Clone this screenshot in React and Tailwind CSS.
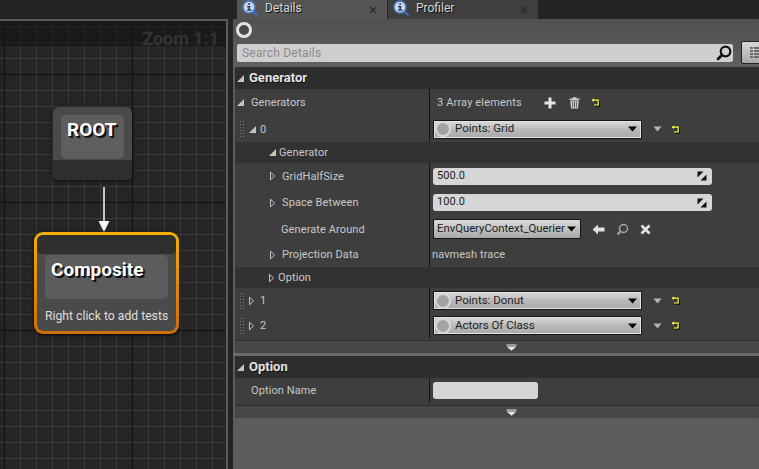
import React from "react";

const Tri = ({ open, className = "" }) =>
  open ? (
    <svg width="9" height="9" viewBox="0 0 9 9" className={`shrink-0 ${className}`}>
      <path d="M8 1V8H1Z" fill="#c4c4c4" />
    </svg>
  ) : (
    <svg width="7" height="10" viewBox="0 0 7 10" className={`shrink-0 ${className}`}>
      <path d="M1.5 1.2L5.6 5L1.5 8.8Z" fill="none" stroke="#c4c4c4" strokeWidth="1" />
    </svg>
  );

const InfoIcon = () => (
  <svg width="17" height="17" viewBox="0 0 17 17" className="shrink-0">
    <path d="M10.5 11L15 15" stroke="#3d6fc4" strokeWidth="2" strokeLinecap="round" />
    <circle cx="7" cy="7" r="6" fill="#c8d8ec" stroke="#4a7cc9" strokeWidth="1.6" />
    <rect x="5" y="6" width="3.4" height="1.2" fill="#26364d" />
    <rect x="6.4" y="6" width="1.6" height="4" fill="#26364d" />
    <rect x="5" y="9.6" width="4.6" height="1.2" fill="#26364d" />
    <rect x="6.2" y="3.2" width="1.8" height="1.6" fill="#26364d" />
  </svg>
);

const CloseX = () => (
  <svg width="8" height="8" viewBox="0 0 8 8">
    <path d="M1 1L7 7M7 1L1 7" stroke="#2c2c2c" strokeWidth="1.2" />
  </svg>
);

const ResetIcon = () => (
  <svg width="9" height="9" viewBox="0 0 9 9" className="shrink-0">
    <path d="M1.4 2.2H7.6V7.4H3" fill="none" stroke="#111" strokeWidth="1.2" transform="translate(.8 .8)" />
    <path d="M1.4 2.2H7.2V7H3" fill="none" stroke="#ffff33" strokeWidth="1.2" />
    <path d="M3 .4V4L.6 2.2Z" fill="#ffff33" />
  </svg>
);

const SmallDown = () => (
  <svg width="9" height="6" viewBox="0 0 9 6" className="shrink-0">
    <path d="M.5 .5H8.5L4.5 5.5Z" fill="#b4b4b4" />
  </svg>
);

const Caret = () => (
  <svg width="9" height="6" viewBox="0 0 9 6" className="shrink-0">
    <path d="M0 .5H9L4.5 5.5Z" fill="#050505" />
  </svg>
);

const Grip = () => (
  <div className="grid grid-cols-2 gap-x-[2px] gap-y-[2px] w-[4px] shrink-0">
    {Array.from({ length: 12 }).map((_, i) => (
      <span key={i} className="w-px h-px bg-[#777]" />
    ))}
  </div>
);

const Expand = () => (
  <svg width="10" height="10" viewBox="0 0 10 10" className="shrink-0">
    <path d="M.5 .5H6.5L.5 6.5Z" fill="#111" />
    <path d="M9.5 9.5H3.5L9.5 3.5Z" fill="#111" />
  </svg>
);

const FoldArrow = () => (
  <svg width="11" height="7" viewBox="0 0 11 7">
    <path d="M.5 .5H10.5V1.6H.5Z" fill="#e6e6e6" />
    <path d="M.5 2.6H10.5L5.5 6.8Z" fill="#e6e6e6" />
  </svg>
);

const Row = ({ h, left, children, leftClass = "pl-[17px]" }) => (
  <div className={`flex ${h}`}>
    <div className={`w-[194px] flex items-center shrink-0 ${leftClass}`}>{left}</div>
    <div className="w-px bg-[#141414] shrink-0" />
    <div className="flex-1 flex items-center pl-[3px] min-w-0">{children}</div>
  </div>
);

const NumberField = ({ value }) => (
  <div className="w-[279px] h-[17px] rounded-[3px] bg-[#d6d6d6] flex items-center justify-between pl-[4px] pr-[5px] text-[11px] tracking-[0.1px] text-[#1c1c1c]">
    <span>{value}</span>
    <Expand />
  </div>
);

const ClassPicker = ({ label }) => (
  <div className="flex items-center">
    <div className="w-[209px] h-[19px] rounded-[1px] border border-[#161616] bg-gradient-to-b from-[#dcdcdc] via-[#b9b9b9] to-[#a9a9a9] flex items-center pl-[1px] pr-[4px] shadow-[inset_0_0_0_1px_#e4e4e4]">
      <span className="w-[16px] h-[16px] rounded-full bg-[#a3a3a3] border-2 border-[#d8d8d8] shrink-0" />
      <span className="ml-[4px] flex-1 text-[11.5px] text-[#1e1e1e]">{label}</span>
      <Caret />
    </div>
    <div className="ml-[11px]"><SmallDown /></div>
    <div className="ml-[9px]"><ResetIcon /></div>
  </div>
);

const Label = ({ children, className = "" }) => (
  <span className={`pt-[2px] text-[11px] text-[#c8c8c8] tracking-[0.1px] ${className}`}>{children}</span>
);

const SectionHeader = ({ title, h }) => (
  <div className={`${h} bg-[#2e2e2e] flex items-center pl-[1px] gap-[4px]`}>
    <Tri open />
    <span className="text-[13px] font-bold text-[#e4e4e4] [text-shadow:1px_1px_0_#111]">{title}</span>
  </div>
);

const Footer = () => (
  <div className="h-[13px] bg-[#474747] border-t border-[#2e2e2e] flex items-center justify-center rounded-b-[2px]">
    <div className="ml-[28px] mt-[1px]"><FoldArrow /></div>
  </div>
);

const SubHeader = ({ h, children }) => (
  <div className={`${h} bg-[#323232] flex items-center pl-[33px] gap-[2px]`}>{children}</div>
);

const Tab = ({ label, active }) => (
  <div className={`w-[150px] h-[19px] flex items-center pl-[5px] pr-[10px] shrink-0 ${active ? "bg-[#555]" : "bg-[#3f3f3f]"}`}>
    <div className="mt-[-3px]"><InfoIcon /></div>
    <span className="ml-[6px] mt-[-3px] flex-1 text-[12px] text-[#d6d6d6] [text-shadow:1px_1px_0_#111]">{label}</span>
    <CloseX />
  </div>
);

const Graph = () => (
  <div className="w-[228px] h-full flex flex-col shrink-0 bg-[#232323]">
    <div className="h-[19px] shrink-0" />
    <div className="relative flex-1 border-t-2 border-r-2 border-[#5c5c5c] overflow-hidden bg-[#252525] bg-[linear-gradient(#3a3a3a_1px,transparent_1px),linear-gradient(90deg,#3a3a3a_1px,transparent_1px)] bg-[size:16px_16px] bg-[position:4px_5px]">
      {/* major grid lines */}
      <div className="absolute inset-x-0 top-[53px] h-px bg-[#111]" />
      <div className="absolute inset-x-0 top-[181px] h-px bg-[#111]" />
      <div className="absolute inset-x-0 top-[309px] h-px bg-[#111]" />
      <div className="absolute inset-y-0 left-[4px] w-px bg-[#111]" />
      <div className="absolute inset-y-0 left-[132px] w-px bg-[#111]" />
      <div className="absolute inset-x-0 top-0 h-[25px] bg-[#0d0d0d]/50" />
      <span className="absolute right-[7px] top-[7px] text-[18px] leading-[22px] font-bold text-[#333]">Zoom 1:1</span>

      {/* root node */}
      <div className="absolute left-[53px] top-[86px] w-[79px] h-[73px] rounded-[6px] bg-[#4a4a4a] flex flex-col shadow-[0_1px_4px_#111]">
        <div className="flex-1 px-[8px] pt-[8px]">
          <div className="h-[44px] rounded-[5px] bg-[#5e5e5e] pl-[6px] pt-[4px] text-[19px] leading-[22px] font-bold text-white [text-shadow:1px_1px_0_#111,2px_2px_0_#111]">ROOT</div>
        </div>
        <div className="h-[20px] rounded-b-[6px] bg-[#2f2f2f]" />
      </div>

      {/* arrow */}
      <svg width="14" height="46" viewBox="0 0 14 46" className="absolute left-[97px] top-[166px]">
        <path d="M7 0V35" stroke="#f0f0f0" strokeWidth="1.6" />
        <path d="M1.5 34H12.5L7 45Z" fill="#f4f4f4" />
      </svg>

      {/* composite node */}
      <div className="absolute left-[34px] top-[211px] w-[145px] h-[102px] rounded-[9px] bg-gradient-to-b from-[#f5ae00] to-[#cf6d05] p-[3px] shadow-[0_1px_3px_#000]">
        <div className="h-full rounded-[6px] bg-[#4a4a4a] flex flex-col overflow-hidden">
          <div className="h-[19px] bg-[#2f2f2f] rounded-b-[4px] shrink-0" />
          <div className="mx-[8px] mt-[1px] h-[44px] rounded-[5px] bg-[#5c5c5c] pl-[6px] pt-[3px] text-[19px] leading-[24px] font-bold text-white [text-shadow:1px_1px_0_#111,2px_2px_0_#111]">Composite</div>
          <div className="mt-[9px] pl-[8px] text-[12.2px] leading-[16px] text-[#dedede] whitespace-nowrap">Right click to add tests</div>
        </div>
      </div>
    </div>
  </div>
);

export default function App() {
  return (
    <div className="w-[759px] h-[469px] flex overflow-hidden bg-[#232323] font-['Roboto',sans-serif]">
      <Graph />
      <div className="w-[5px] bg-[#232323] shrink-0" />
      <div className="flex-1 min-w-0 flex flex-col">
        <div className="h-[19px] flex shrink-0 pl-[4px] gap-px bg-[#232323]">
          <Tab label="Details" active />
          <Tab label="Profiler" />
        </div>
        <div className="flex-1 flex flex-col bg-[#5c5c5c] min-h-0">
          {/* toolbar */}
          <div className="h-[48px] shrink-0 bg-gradient-to-b from-[#515151] to-[#5f5f5f] relative">
            <span className="absolute left-[3px] top-[3px] w-[16px] h-[16px] rounded-full border-[3px] border-[#e2e2e2] bg-[#4a4a4a]" />
            <div className="absolute left-[4px] top-[25px] w-[496px] h-[18px] rounded-[2px] bg-[#cfcfcf] flex items-center justify-between pl-[5px] pr-[1px]">
              <span className="text-[12px] tracking-[0.2px] text-[#8b8b8b]">Search Details</span>
              <svg width="16" height="16" viewBox="0 0 16 16">
                <circle cx="9.5" cy="6.5" r="4.8" fill="none" stroke="#111" strokeWidth="2.2" />
                <path d="M6 10L2 14" stroke="#111" strokeWidth="2.8" strokeLinecap="round" />
              </svg>
            </div>
            <div className="absolute left-[508px] top-[22px] w-[30px] h-[23px] rounded-[2px] border border-[#222] bg-gradient-to-b from-[#d8d8d8] to-[#a8a8a8] flex items-center pl-[8px]">
              <div className="grid grid-cols-[3px_6px_6px] gap-px">
                {Array.from({ length: 12 }).map((_, i) => (
                  <span key={i} className="h-[2px] bg-[#6c6c6c]" />
                ))}
              </div>
            </div>
          </div>

          {/* generator section */}
          <div className="shrink-0 bg-[#3e3e3e] ml-[2px] flex flex-col">
            <SectionHeader title="Generator" h="h-[22px]" />
            <Row h="h-[27px]" left={<><Tri open /><Label className="ml-[6px]">Generators</Label></>} leftClass="pl-[1px]">
              <div className="flex items-center pl-[4px]">
                <Label className="tracking-[0.15px]">3 Array elements</Label>
                <svg width="12" height="12" viewBox="0 0 12 12" className="ml-[22px]"><path d="M4.5 .5H7.5V4.5H11.5V7.5H7.5V11.5H4.5V7.5H.5V4.5H4.5Z" fill="#e4e4e4" /></svg>
                <svg width="11" height="12" viewBox="0 0 11 12" className="ml-[13px]">
                  <path d="M.5 1.5H10.5V3H.5ZM3.5 .2H7.5V1.5H3.5Z" fill="#cfcfcf" />
                  <path d="M1.3 3.4H9.7L9 11.6H2Z" fill="#cfcfcf" />
                  <path d="M3.6 4.5V10.5M5.5 4.5V10.5M7.4 4.5V10.5" stroke="#555" strokeWidth=".9" />
                </svg>
                <div className="ml-[11px]"><ResetIcon /></div>
              </div>
            </Row>
            <Row h="h-[26px]" leftClass="pl-[5px]" left={<><Grip /><Tri open className="ml-[4px]" /><Label className="ml-[3px] text-[11.5px]">0</Label></>}>
              <ClassPicker label="Points: Grid" />
            </Row>
            <SubHeader h="h-[21px]"><Tri open /><Label>Generator</Label></SubHeader>
            <Row h="h-[26px]" leftClass="pl-[34px]" left={<><Tri /><Label className="ml-[6px]">GridHalfSize</Label></>}><NumberField value="500.0" /></Row>
            <Row h="h-[27px]" leftClass="pl-[34px]" left={<><Tri /><Label className="ml-[6px]">Space Between</Label></>}><NumberField value="100.0" /></Row>
            <Row h="h-[26px]" leftClass="pl-[46px]" left={<Label>Generate Around</Label>}>
              <div className="flex items-center">
                <div className="w-[148px] h-[20px] rounded-[2px] border border-[#161616] bg-gradient-to-b from-[#dcdcdc] to-[#a8a8a8] flex items-center justify-between pl-[3px] pr-[4px] text-[11.3px] text-[#1c1c1c] whitespace-nowrap">
                  <span>EnvQueryContext_Querier</span>
                  <Caret />
                </div>
                <svg width="13" height="11" viewBox="0 0 13 11" className="ml-[11px]"><path d="M.5 5.5L6 .5V3.5H12.5V7.5H6V10.5Z" fill="#e0e0e0" /></svg>
                <svg width="13" height="13" viewBox="0 0 13 13" className="ml-[11px]"><circle cx="7.5" cy="5.5" r="4" fill="none" stroke="#a8a8a8" strokeWidth="1.5" /><path d="M4.5 8.5L1.5 11.5" stroke="#a8a8a8" strokeWidth="2" /></svg>
                <svg width="11" height="11" viewBox="0 0 11 11" className="ml-[11px]"><path d="M1.5 1.5L9.5 9.5M9.5 1.5L1.5 9.5" stroke="#e4e4e4" strokeWidth="2.6" /></svg>
              </div>
            </Row>
            <Row h="h-[25px]" leftClass="pl-[34px]" left={<><Tri /><Label className="ml-[6px]">Projection Data</Label></>}>
              <Label className="ml-[-1px]">navmesh trace</Label>
            </Row>
            <SubHeader h="h-[21px]"><Tri /><Label className="ml-[1px]">Option</Label></SubHeader>
            <Row h="h-[25px]" leftClass="pl-[5px]" left={<><Grip /><Tri className="ml-[4px]" /><Label className="ml-[5px] text-[11.5px]">1</Label></>}>
              <ClassPicker label="Points: Donut" />
            </Row>
            <Row h="h-[25px]" leftClass="pl-[5px]" left={<><Grip /><Tri className="ml-[4px]" /><Label className="ml-[5px] text-[11.5px]">2</Label></>}>
              <ClassPicker label="Actors Of Class" />
            </Row>
            <div className="h-[2px]" />
            <Footer />
          </div>

          <div className="h-[3px] shrink-0 bg-[#6a6a6a]" />

          {/* option section */}
          <div className="shrink-0 bg-[#3e3e3e] ml-[2px] flex flex-col">
            <SectionHeader title="Option" h="h-[22px]" />
            <Row h="h-[25px]" leftClass="pl-[16px]" left={<Label>Option Name</Label>}>
              <div className="w-[105px] h-[17px] rounded-[3px] bg-[#d6d6d6]" />
            </Row>
            <div className="h-[2px]" />
            <Footer />
          </div>
        </div>
      </div>
    </div>
  );
}
